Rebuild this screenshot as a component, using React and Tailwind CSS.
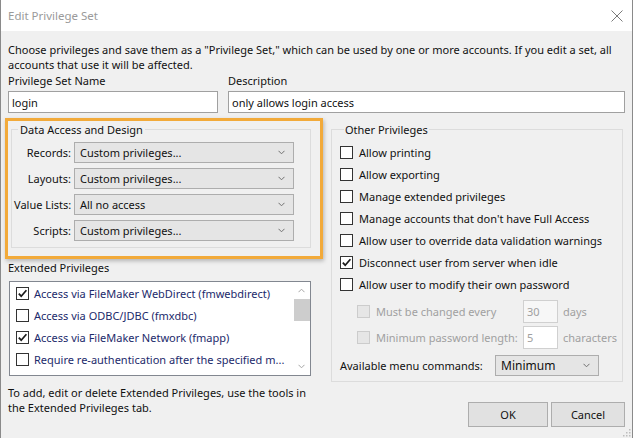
import React from "react";

function Box({ checked, disabled }) {
  return (
    <span
      className={`flex h-[13px] w-[13px] shrink-0 items-center justify-center border ${
        disabled ? "border-[#cccccc] bg-[#e6e6e6]" : "border-[#333333] bg-white"
      }`}
    >
      {checked && (
        <svg width="11" height="11" viewBox="0 0 11 11">
          <path d="M1.8 5.6 L4.2 8.2 L9.4 2.2" fill="none" stroke="#1a1a1a" strokeWidth="1.7" />
        </svg>
      )}
    </span>
  );
}

function Chevron({ color = "#707070" }) {
  return (
    <svg width="7" height="5" viewBox="0 0 7 5">
      <path d="M0.5 0.8 L3.5 3.8 L6.5 0.8" fill="none" stroke={color} strokeWidth="1" />
    </svg>
  );
}

function Select({ value, className }) {
  return (
    <div
      className={`flex h-[21px] items-center justify-between border border-[#adadad] bg-[#e5e5e5] pl-[5px] pr-[8px] ${className}`}
    >
      <span>{value}</span>
      <Chevron />
    </div>
  );
}

const dataRows = [
  ["Records:", "Custom privileges..."],
  ["Layouts:", "Custom privileges..."],
  ["Value Lists:", "All no access"],
  ["Scripts:", "Custom privileges..."],
];

const extRows = [
  [true, "Access via FileMaker WebDirect (fmwebdirect)"],
  [false, "Access via ODBC/JDBC (fmxdbc)"],
  [true, "Access via FileMaker Network (fmapp)"],
  [false, "Require re-authentication after the specified m..."],
];

const otherRows = [
  [false, "Allow printing"],
  [false, "Allow exporting"],
  [false, "Manage extended privileges"],
  [false, "Manage accounts that don't have Full Access"],
  [false, "Allow user to override data validation warnings"],
  [true, "Disconnect user from server when idle"],
  [false, "Allow user to modify their own password"],
];

export default function App() {
  return (
    <div className="relative h-[438px] w-[633px] overflow-hidden border-x border-[#8a8a8a] bg-[#f0f0f0] font-['Noto_Sans',sans-serif] text-[11px] leading-[15px] text-[#111]">
      {/* title bar */}
      <div className="flex h-[31px] items-center justify-between bg-white pl-[7px] pr-[9px]">
        <span className="text-[11.5px] text-[#9a9a9a]">Edit Privilege Set</span>
        <svg width="12" height="12" viewBox="0 0 12 12">
          <path d="M0.5 0.5 L11.5 11.5 M11.5 0.5 L0.5 11.5" stroke="#7a7a7a" strokeWidth="1" />
        </svg>
      </div>

      <div className="px-[7px] pt-[11px]">
        <p>
          Choose privileges and save them as a "Privilege Set," which can be used by one or more accounts. If you edit a set, all
          accounts that use it will be affected.
        </p>

        <div className="mt-[1px] flex">
          <div className="w-[220px]">
            <div>Privilege Set Name</div>
            <div className="mt-[3px] flex h-[22px] w-[210px] items-center border border-[#a0a0a0] bg-white px-[3px]">login</div>
          </div>
          <div className="flex-1">
            <div>Description</div>
            <div className="mt-[3px] flex h-[22px] items-center border border-[#a0a0a0] bg-white px-[3px]">
              only allows login access
            </div>
          </div>
        </div>

        <div className="mt-[5px] flex">
          {/* left column */}
          <div className="w-[323px]">
            <div className="-ml-[3px] w-[318px] border-[3px] border-[#f2aa3a] px-[3px] pb-[8px] pt-[1px] shadow-[1px_2px_4px_rgba(0,0,0,0.25)]">
              <fieldset className="w-[300px] border border-[#dcdcdc] pb-[6px] pl-[2px]">
                <legend className="ml-[4px] px-[2px]">Data Access and Design</legend>
                <div className="mt-[5px] flex flex-col gap-[5px]">
                  {dataRows.map(([label, value]) => (
                    <div key={label} className="flex items-center">
                      <span className="w-[57px] whitespace-nowrap text-right">{label}</span>
                      <Select value={value} className="ml-[3px] w-[220px]" />
                    </div>
                  ))}
                </div>
              </fieldset>
            </div>

            <div className="mt-[1px]">Extended Privileges</div>
            <div className="mt-[6px] ml-[1px] flex h-[95px] w-[302px] border border-[#828790] bg-white">
              <div className="flex-1 pl-[6px] pt-[0px]">
                {extRows.map(([checked, text]) => (
                  <div key={text} className="flex h-[22px] items-center gap-[5px] text-[#1c2a6b]">
                    <Box checked={checked} />
                    <span className="whitespace-nowrap">{text}</span>
                  </div>
                ))}
              </div>
              <div className="flex w-[17px] flex-col items-center">
                <div className="flex h-[17px] items-center">
                  <svg width="7" height="5" viewBox="0 0 7 5">
                    <path d="M0.5 4.2 L3.5 1.2 L6.5 4.2" fill="none" stroke="#a6a6a6" strokeWidth="1" />
                  </svg>
                </div>
                <div className="h-[22px] w-[16px] bg-[#cdcdcd]" />
                <div className="flex-1" />
                <div className="flex h-[17px] items-center">
                  <Chevron color="#a6a6a6" />
                </div>
              </div>
            </div>
            <p className="mt-[9px]">
              To add, edit or delete Extended Privileges, use the tools in
              <br />
              the Extended Privileges tab.
            </p>
          </div>

          {/* right column */}
          <div className="w-[292px]">
            <fieldset className="mt-[4px] border border-[#dcdcdc] pb-[5px] pl-[8px]">
              <legend className="ml-[4px] px-[1px]">Other Privileges</legend>
              <div className="mt-[4px]">
                {otherRows.map(([checked, text]) => (
                  <div key={text} className="flex h-[22px] items-center gap-[6px]">
                    <Box checked={checked} />
                    <span className="whitespace-nowrap">{text}</span>
                  </div>
                ))}
              </div>
              <div className="mt-[5px] flex flex-col gap-[3px] pl-[17px] text-[#a0a0a0]">
                <div className="flex h-[23px] items-center">
                  <Box disabled />
                  <span className="ml-[6px] w-[147px]">Must be changed every</span>
                  <div className="flex h-[23px] w-[35px] items-center border border-[#d0d0d0] bg-[#f7f7f7] px-[3px]">30</div>
                  <span className="ml-[5px]">days</span>
                </div>
                <div className="flex h-[23px] items-center">
                  <Box disabled />
                  <span className="ml-[6px] w-[147px]">Minimum password length:</span>
                  <div className="flex h-[23px] w-[35px] items-center border border-[#d0d0d0] bg-white px-[3px]">5</div>
                  <span className="ml-[5px]">characters</span>
                </div>
              </div>
              <div className="mt-[6px] flex items-center">
                <span className="w-[155px]">Available menu commands:</span>
                <Select value="Minimum" className="w-[104px] text-[12px]" />
              </div>
            </fieldset>
          </div>
        </div>
      </div>

      {/* buttons */}
      <div className="absolute bottom-[11px] right-[7px] flex gap-[3px]">
        <button className="h-[25px] w-[80px] border border-[#adadad] bg-[#e1e1e1]">OK</button>
        <button className="h-[25px] w-[74px] border border-[#adadad] bg-[#e1e1e1]">Cancel</button>
      </div>
      <svg className="absolute bottom-[1px] right-[1px]" width="10" height="10" viewBox="0 0 10 10">
        {[
          [8, 2],
          [8, 5],
          [5, 5],
          [8, 8],
          [5, 8],
          [2, 8],
        ].map(([x, y]) => (
          <rect key={`${x}-${y}`} x={x} y={y} width="1.5" height="1.5" fill="#bdbdbd" />
        ))}
      </svg>
    </div>
  );
}
